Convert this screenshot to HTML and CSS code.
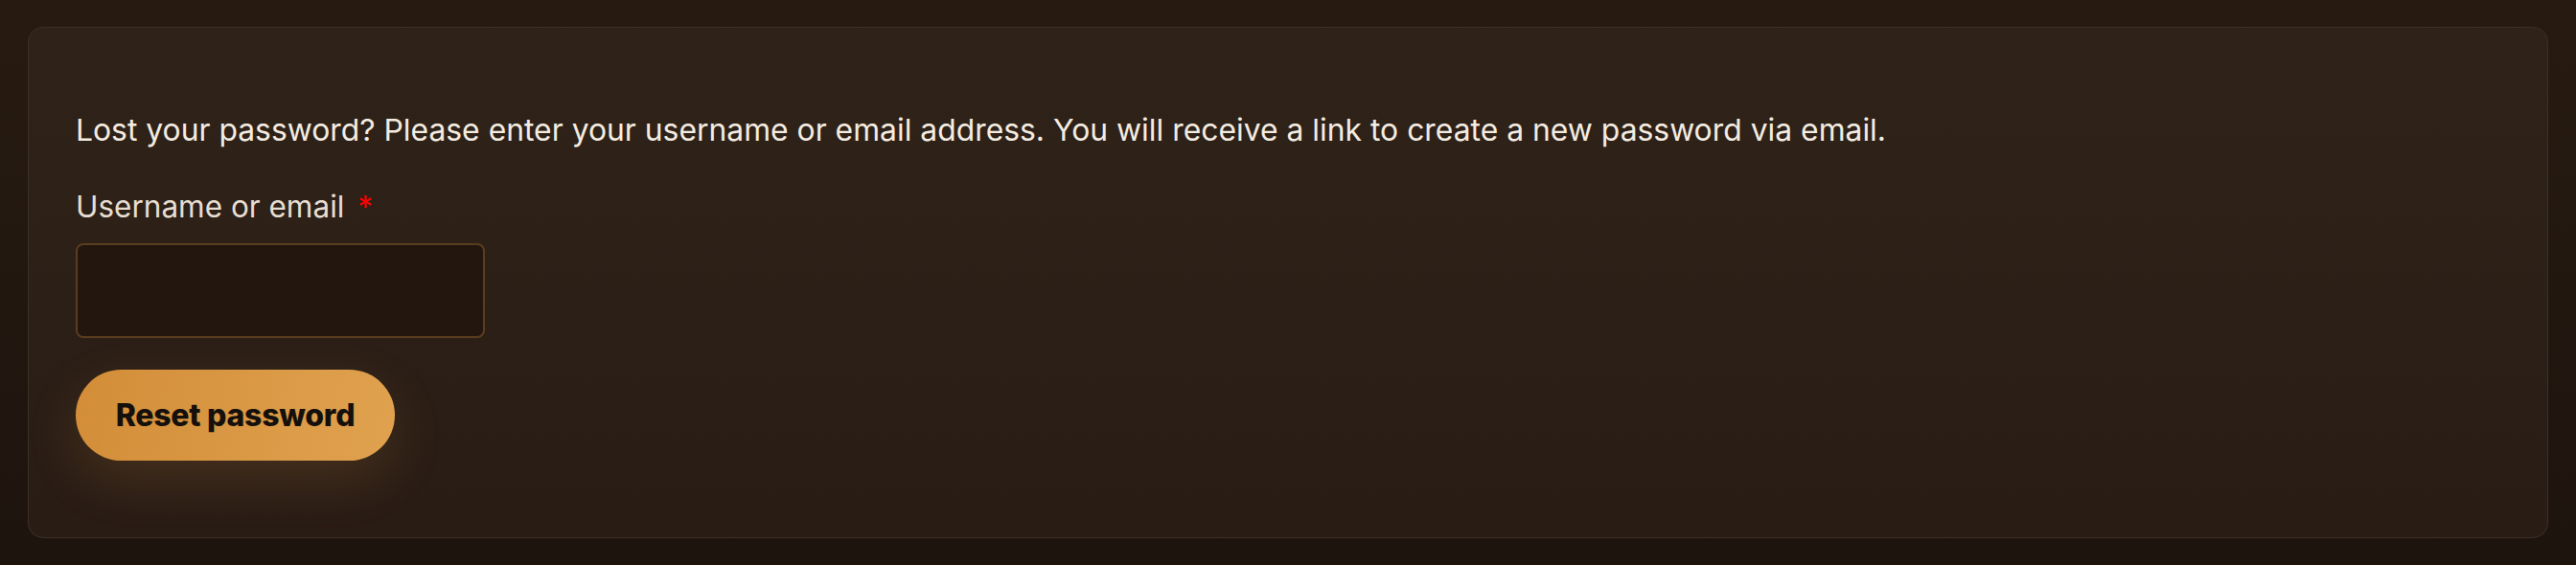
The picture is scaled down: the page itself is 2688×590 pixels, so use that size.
FILE: index.html
```html
<!DOCTYPE html>
<html lang="en">
<head>
<meta charset="utf-8">
<title>Lost password</title>
<link rel="stylesheet" href="styles.css">
</head>
<body>
<main class="page">
  <form class="card">
    <p class="intro">Lost your password? Please enter your username or email address. You will receive a link to create a new password via email.</p>
    <div class="field">
      <label class="label" for="user">Username or email <span class="req">*</span></label>
      <input class="input" id="user" type="text">
    </div>
    <button class="btn" type="button">Reset password</button>
  </form>
</main>
</body>
</html>
```

FILE: styles.css
```css
html, body {
  margin: 0;
  padding: 0;
  height: 100%;
}
body {
  background: linear-gradient(180deg, #271b11 0%, #1e140e 100%);
  font-family: Inter, "Noto Sans", sans-serif;
  color: #f3ebdf;
}
.page {
  padding: 28px 29px;
  box-sizing: border-box;
}
.card {
  display: flex;
  flex-direction: column;
  align-items: flex-start;
  border: 1.5px solid #3c3025;
  border-radius: 16px;
  background: linear-gradient(180deg, #2f2319 0%, #291c15 100%);
  padding: 83px 49px 80px 49px;
  height: 534px;
  box-sizing: border-box;
}
.intro {
  margin: 0 0 32px 0;
  font-size: 31.85px;
  line-height: 48px;
  color: #f4ece1;
}
.field {
  display: flex;
  flex-direction: column;
  gap: 14px;
  margin-bottom: 33px;
}
.label {
  font-size: 31.5px;
  line-height: 48px;
  color: #e7ded2;
}
.req {
  color: #ff0000;
  margin-left: 5px;
}
.input {
  width: 427px;
  height: 99px;
  box-sizing: border-box;
  background: #22160f;
  border: 2px solid #5a3d1f;
  border-radius: 8px;
  margin: 0;
  padding: 0 20px;
  outline: none;
}
.btn {
  width: 333px;
  height: 96px;
  border: none;
  border-radius: 48px;
  background: linear-gradient(100deg, #d38d38 0%, #e0a24f 100%);
  color: #15100b;
  font-family: Inter, "Noto Sans", sans-serif;
  font-weight: 800;
  font-size: 32px;
  letter-spacing: -0.25px;
  padding: 0;
  box-shadow: 0 20px 55px rgba(214, 150, 70, 0.16);
  cursor: pointer;
}
```
